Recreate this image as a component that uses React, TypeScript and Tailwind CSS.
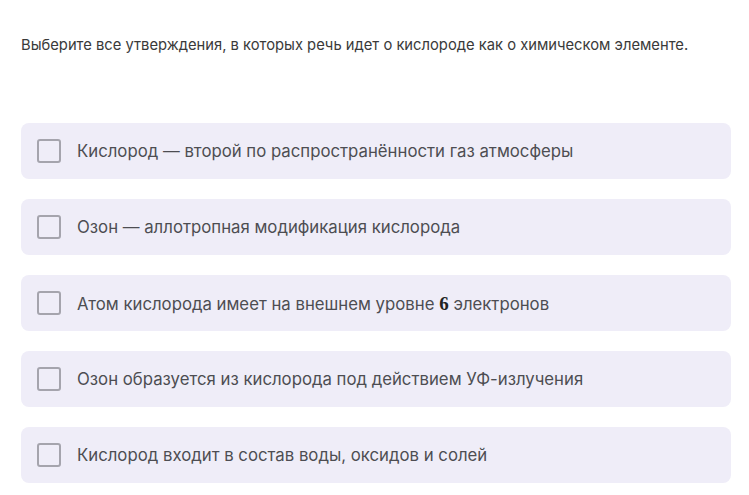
import React, { useState } from 'react';

const options: React.ReactNode[] = [
    'Кислород — второй по распространённости газ атмосферы',
    'Озон — аллотропная модификация кислорода',
    <>
        Атом кислорода имеет на внешнем уровне{' '}
        <span className="font-bold text-[19px] text-[#222]" style={{ fontFamily: '"Liberation Serif", serif' }}>6</span>{' '}
        электронов
    </>,
    'Озон образуется из кислорода под действием УФ-излучения',
    'Кислород входит в состав воды, оксидов и солей',
];

const Option: React.FC<{ children: React.ReactNode }> = ({ children }) => {
    const [checked, setChecked] = useState(false);
    return (
        <button
            onClick={() => setChecked(!checked)}
            className="w-full h-[56px] flex items-center gap-4 px-4 rounded-lg bg-[#efedf8] text-left"
        >
            <span
                className={`w-6 h-6 shrink-0 rounded-[3px] border-2 ${checked ? 'border-[#7b61ff] bg-[#7b61ff]' : 'border-[#a5a4ad] bg-transparent'}`}
            />
            <span className="text-[16.75px] text-[#4d4d52] leading-none">{children}</span>
        </button>
    );
};

export default function App() {
    return (
        <div className="w-[749px] h-[495px] bg-white px-[21px] pt-[36px]" style={{ fontFamily: 'Inter, "Noto Sans", sans-serif' }}>
            <p className="text-[14.75px] text-[#3a3a3a] leading-[18px]">
                Выберите все утверждения, в которых речь идет о кислороде как о химическом элементе.
            </p>
            <div className="mt-[69px] w-[710px] flex flex-col gap-5">
                {options.map((o, i) => (
                    <Option key={i}>{o}</Option>
                ))}
            </div>
        </div>
    );
}
